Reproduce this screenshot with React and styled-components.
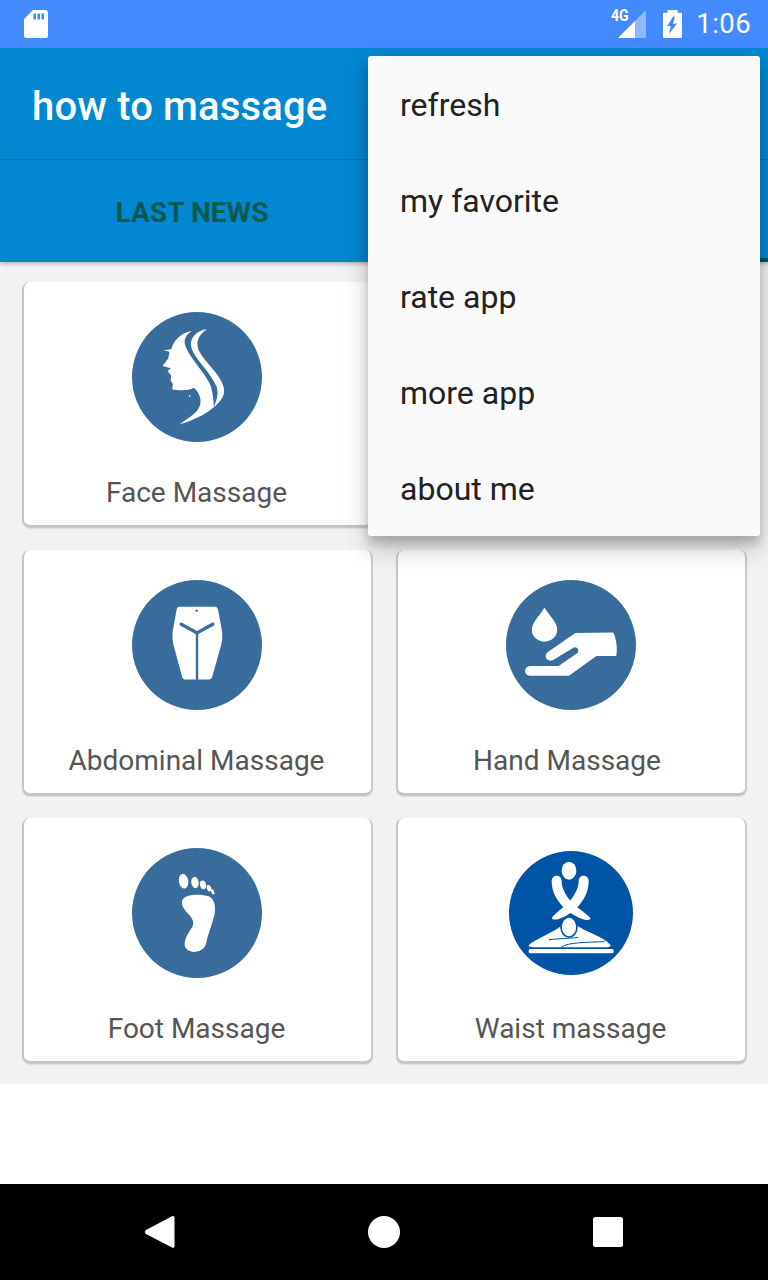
import React from "react";
import styled, { createGlobalStyle } from "styled-components";

const Global = createGlobalStyle`
  html, body { margin: 0; padding: 0; background: #fff; }
  * { box-sizing: border-box; }
`;

const Screen = styled.div`
  position: relative;
  width: 768px;
  height: 1280px;
  display: flex;
  flex-direction: column;
  overflow: hidden;
  font-family: Roboto, "Liberation Sans", sans-serif;
  background: #fff;
`;

const StatusBar = styled.div`
  height: 48px;
  flex: none;
  background: #448aff;
  display: flex;
  align-items: center;
  padding: 0 17px 0 24px;
  color: #fff;
`;
const StatusRight = styled.div`
  margin-left: auto;
  display: flex;
  align-items: center;
`;
const NetworkWrap = styled.div`
  position: relative;
  width: 36px;
  height: 30px;
  margin-right: 16px;
`;
const NetworkLabel = styled.span`
  position: absolute;
  left: 0;
  top: 0;
  font-size: 16px;
  font-weight: 700;
  line-height: 14px;
  transform: scaleX(0.88);
  transform-origin: left;
`;
const Clock = styled.span`
  font-size: 27.5px;
  line-height: 48px;
  margin-left: 14px;
  letter-spacing: 0.4px;
`;

const AppBar = styled.header`
  height: 112px;
  flex: none;
  background: #0288d1;
  border-bottom: 1px solid #0479b8;
  display: flex;
  align-items: center;
  padding: 6px 32px 0;
`;
const Title = styled.h1`
  margin: 0;
  font-size: 40px;
  font-weight: 500;
  letter-spacing: 0.15px;
  color: #fff;
`;

const Tabs = styled.nav`
  height: 102px;
  flex: none;
  background: #0288d1;
  display: flex;
  position: relative;
  z-index: 1;
  box-shadow: 0 2px 4px rgba(0, 0, 0, 0.25);
`;
const Tab = styled.div`
  flex: 1;
  display: flex;
  align-items: center;
  justify-content: center;
  padding-top: 6px;
  font-size: 28px;
  font-weight: 700;
  letter-spacing: 0.08px;
  color: #055a50;
  border-bottom: 4px solid ${(p) => (p.$active ? "#00574b" : "transparent")};
`;

const Content = styled.main`
  height: 822px;
  flex: none;
  background: #f2f2f2;
  padding: 20px 21px 20px 22px;
  display: grid;
  grid-template-columns: 351px 351px;
  grid-auto-rows: 246px;
  column-gap: 23px;
  row-gap: 22px;
`;
const Card = styled.article`
  background: #fff;
  border-radius: 8px;
  border-left: 2px solid #c6c6c6;
  border-right: 2px solid #cacaca;
  border-bottom: 3px solid #c6c6c6;
  box-shadow: 0 1px 1px rgba(0, 0, 0, 0.08);
  display: flex;
  flex-direction: column;
  align-items: center;
  padding: 30px 2px 0 0;
`;
const Label = styled.div`
  margin-top: 33px;
  font-size: 28px;
  line-height: 36px;
  color: #555;
  white-space: nowrap;
  padding-right: ${(p) => p.$nudge || 0}px;
`;
const Badge = styled.svg`
  width: 130px;
  height: 130px;
  display: block;
  flex: none;
`;

const Spacer = styled.div`
  flex: 1;
  background: #fff;
`;

const NavBar = styled.div`
  height: 96px;
  flex: none;
  background: #000;
  display: grid;
  grid-template-columns: repeat(3, 1fr);
  padding: 0 48px;
  align-items: center;
  justify-items: center;
`;

const Menu = styled.ul`
  position: absolute;
  left: 368px;
  top: 56px;
  width: 392px;
  margin: 0;
  padding: 0;
  list-style: none;
  background: #fafafa;
  border-radius: 3px;
  z-index: 5;
  box-shadow: 0 16px 24px rgba(0, 0, 0, 0.12), 0 6px 30px rgba(0, 0, 0, 0.1),
    0 8px 10px rgba(0, 0, 0, 0.16);
`;
const MenuItem = styled.li`
  height: 96px;
  display: flex;
  align-items: center;
  padding: 2px 0 0 32px;
  font-size: 32px;
  color: #212121;
`;

const BLUE = "#376c9c";
const DEEP = "#0054a6";

const FaceIcon = () => (
  <Badge viewBox="66 36 388 388">
    <circle cx="260" cy="230" r="194" fill={BLUE} />
    <path fill="#fff" d="M245 93C225 105 220 120 225 135C234 170 292 225 302 260C308 285 310 300 310 320C280 345 245 360 207 372C245 345 275 330 270 295C266 275 255 265 250 262C235 272 205 270 186 267L188 252L181 240L183 226L172 212L182 204L157 197L174 175L178 155L160 150L183 147C192 118 215 97 245 93Z" />
    <path fill="#fff" d="M290 87C262 92 240 110 242 135C245 170 302 215 319 260C325 285 318 300 310 320C330 305 345 285 340 262C330 220 285 190 265 150C255 125 265 105 290 87Z" />
    <circle cx="238" cy="287" r="2.500" fill="#fff" />
  </Badge>
);

const AbdomenIcon = () => (
  <Badge viewBox="66 30 388 388">
    <circle cx="260" cy="224" r="194" fill={BLUE} />
    <path fill="#fff" d="M205 110H316Q322 112 324 125L335 185Q337 205 332 225L305 320Q303 327 296 327H224Q218 327 216 320L190 225Q185 205 187 185L198 125Q200 112 205 110Z" />
    <path fill="none" stroke={BLUE} strokeWidth="10" strokeLinecap="round" d="M213 162L260 188L307 162" />
    <path fill="none" stroke={BLUE} strokeWidth="7" d="M260 188L260 328" />
    <ellipse cx="259" cy="122" rx="4.500" ry="3" fill={BLUE} />
  </Badge>
);

const HandIcon = () => (
  <Badge viewBox="48 30 388 388">
    <circle cx="242" cy="224" r="194" fill={BLUE} />
    <path fill="#fff" d="M163 112C150 135 125 155 125 180C125 200 145 214 163 214C185 214 201 198 201 178C201 155 175 135 163 112Z" />
    <path fill="#fff" d="M255 188L368 187C376 200 382 235 377 257L318 257L236 316L120 316C100 316 100 287 120 287L205 287L262 247C268 238 258 225 248 233L190 268C172 278 158 258 172 246Z" />
  </Badge>
);

const FootIcon = () => (
  <Badge viewBox="66 24 388 388">
    <circle cx="260" cy="218" r="194" fill={BLUE} />
    <ellipse cx="220" cy="123" rx="14" ry="22" fill="#fff" transform="rotate(-10 220 123)" />
    <ellipse cx="254" cy="127" rx="11" ry="17" fill="#fff" transform="rotate(-10 254 127)" />
    <ellipse cx="278" cy="134" rx="9" ry="13" fill="#fff" transform="rotate(-15 278 134)" />
    <ellipse cx="296" cy="144" rx="6.500" ry="10" fill="#fff" transform="rotate(-20 296 144)" />
    <ellipse cx="307" cy="155" rx="4.500" ry="8" fill="#fff" transform="rotate(-20 307 155)" />
    <path fill="#fff" d="M216 180C223 161 270 160 295 168C317 178 317 210 309 235C300 265 292 285 287 310C280 337 238 342 226 322C216 305 233 280 246 260C256 240 238 225 226 212C216 200 213 190 216 180Z" />
  </Badge>
);

const WaistIcon = () => (
  <Badge viewBox="49 25 390 390">
    <circle cx="244" cy="220" r="186" fill={DEEP} />
    <ellipse cx="238" cy="93" rx="22" ry="27" fill="#fff" />
    <path fill="#fff" d="M186 125C186 103 216 103 216 125C216 150 234 178 257 198C272 210 292 223 302 235C304 241 295 242 285 240C238 227 186 182 186 125Z" />
    <path fill="#fff" d="M297 125C297 103 267 103 267 125C267 150 249 178 226 198C211 210 196 222 188 232C184 241 195 240 205 239C247 227 297 182 297 125Z" />
    <path fill="#fff" d="M118 316C135 298 185 282 215 258L263 258C285 275 340 290 362 315C366 322 355 323 335 323L140 323C125 323 113 322 118 316Z" />
    <ellipse cx="238" cy="262" rx="24" ry="30" fill="#fff" stroke={DEEP} strokeWidth="5" />
    <path fill="none" stroke={DEEP} strokeWidth="3" d="M178 300C200 297 240 297 265 293M215 322C235 308 290 308 345 306" />
    <rect x="117" y="328" width="255" height="13" rx="5" fill="#fff" />
  </Badge>
);

const cards = [
  { label: "Face Massage", Icon: FaceIcon },
  { label: "", Icon: null },
  { label: "Abdominal Massage", Icon: AbdomenIcon },
  { label: "Hand Massage", Icon: HandIcon, nudge: 7 },
  { label: "Foot Massage", Icon: FootIcon },
  { label: "Waist massage", Icon: WaistIcon },
];

const menu = ["refresh", "my favorite", "rate app", "more app", "about me"];

export default function App() {
  return (
    <>
      <Global />
      <Screen>
        <StatusBar>
          <svg width="24" height="28" viewBox="0 0 24 28">
            <path fill="#fff" d="M9 0H21a3 3 0 0 1 3 3V25.500a2.500 2.500 0 0 1-2.500 2.500H2.500A2.500 2.500 0 0 1 0 25.500V9Z" />
            <path fill="#448aff" d="M9.500 3.500h2.500v6H9.500zM13.500 3.500h2.500v6h-2.500zM17.500 3.500h2.500v6h-2.500z" />
          </svg>
          <StatusRight>
            <NetworkWrap>
              <NetworkLabel>4G</NetworkLabel>
              <svg width="36" height="30" viewBox="0 0 36 30">
                <path fill="#fff" fillOpacity="0.4" d="M35 1V29H24V12Z" />
                <path fill="#fff" d="M24 12V29H7Z" />
              </svg>
            </NetworkWrap>
            <svg width="19" height="28" viewBox="0 0 19 28">
              <path fill="#fff" d="M4.500 0H14.500V2.700H18A1 1 0 0 1 19 3.700V27A1 1 0 0 1 18 28H1A1 1 0 0 1 0 27V3.700A1 1 0 0 1 1 2.700H4.500Z" />
              <path fill="#448aff" d="M10 6.700 4.300 16H7.700L6 24 14.300 13.300 10 14 12 6.700Z" />
            </svg>
            <Clock>1:06</Clock>
          </StatusRight>
        </StatusBar>

        <AppBar>
          <Title>how to massage</Title>
        </AppBar>

        <Tabs>
          <Tab>LAST NEWS</Tab>
          <Tab $active />
        </Tabs>

        <Content>
          {cards.map(({ label, Icon, nudge }, i) => (
            <Card key={i}>
              {Icon && <Icon />}
              {label && <Label $nudge={nudge}>{label}</Label>}
            </Card>
          ))}
        </Content>

        <Spacer />

        <NavBar>
          <svg width="30" height="34" viewBox="0 0 30 34">
            <path fill="#fff" d="M28 1a1.500 1.500 0 0 1 1.500 1.500v29a1.500 1.500 0 0 1-2.500 1L1 19a2.500 2.500 0 0 1 0-4L27 1.200Z" />
          </svg>
          <svg width="32" height="32" viewBox="0 0 32 32">
            <circle cx="16" cy="16" r="16" fill="#fff" />
          </svg>
          <svg width="30" height="30" viewBox="0 0 30 30">
            <rect width="30" height="30" rx="2.500" fill="#fff" />
          </svg>
        </NavBar>

        <Menu>
          {menu.map((m) => (
            <MenuItem key={m}>{m}</MenuItem>
          ))}
        </Menu>
      </Screen>
    </>
  );
}
